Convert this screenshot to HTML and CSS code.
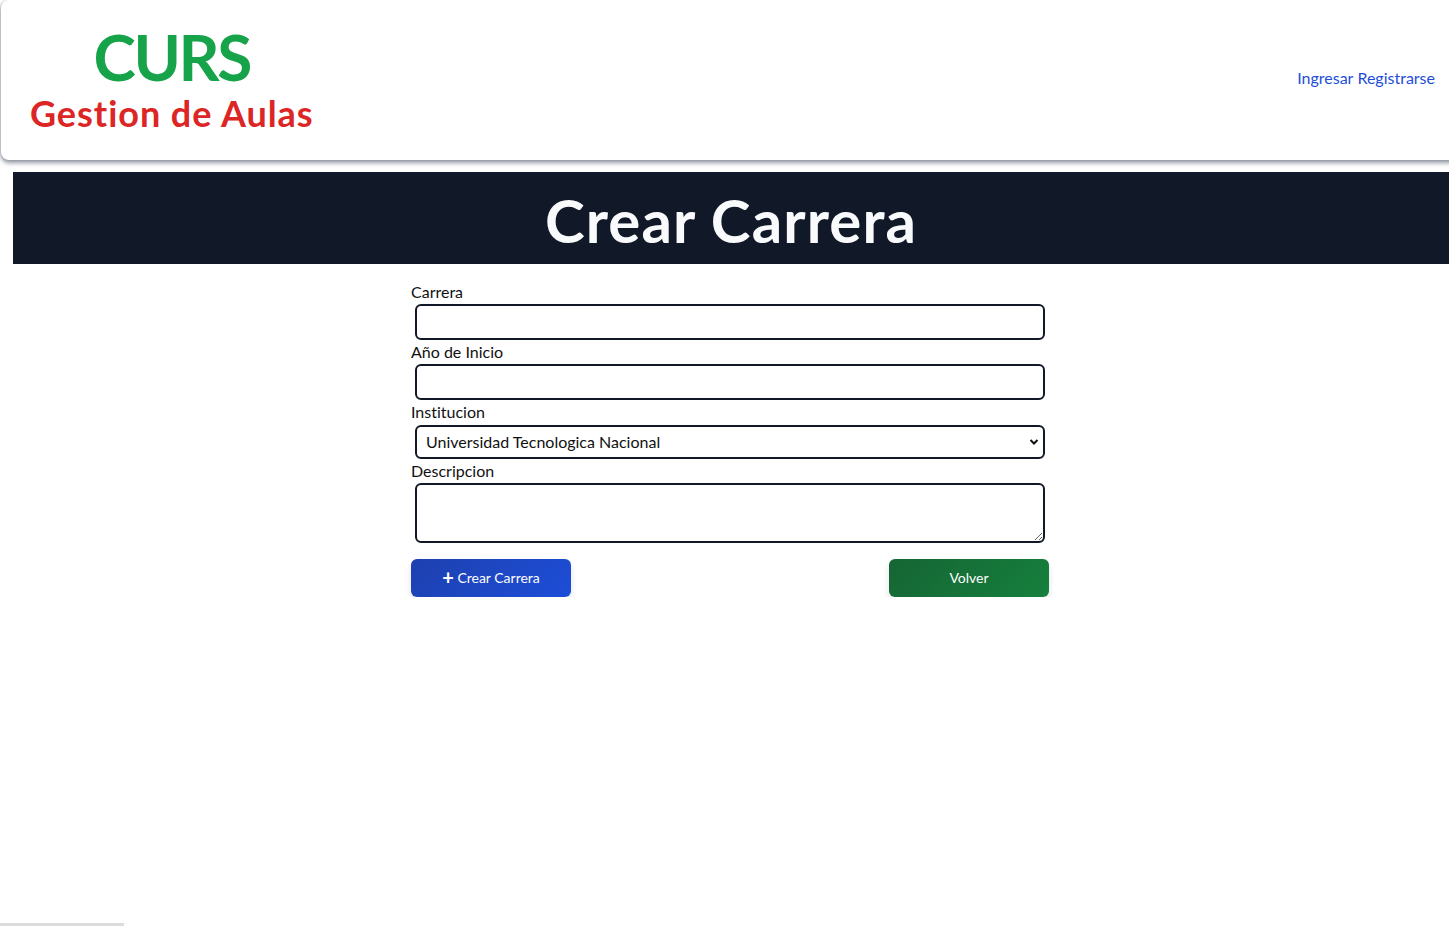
FILE: index.html
```html
<!DOCTYPE html>
<html lang="es">
<head>
<meta charset="utf-8">
<title>Crear Carrera</title>
<link rel="stylesheet" href="styles.css">
</head>
<body>
<header class="header">
  <div class="brand">
    <div class="brand-title">CURS</div>
    <div class="brand-sub">Gestion de Aulas</div>
  </div>
  <nav class="nav">
    <a href="#" class="nav-link">Ingresar</a>
    <a href="#" class="nav-link">Registrarse</a>
  </nav>
</header>
<main class="main">
  <div class="title-bar">
    <h1 class="title">Crear Carrera</h1>
  </div>
  <form class="form">
    <label class="label">Carrera</label>
    <input class="field" type="text">
    <label class="label">Año de Inicio</label>
    <input class="field" type="text">
    <label class="label">Institucion</label>
    <div class="select-wrap">
      <select class="field select">
        <option>Universidad Tecnologica Nacional</option>
      </select>
      <svg class="chevron" width="10" height="8" viewBox="0 0 10 8"><path d="M1.5 2 L5 5.5 L8.5 2" fill="none" stroke="#111" stroke-width="2"/></svg>
    </div>
    <label class="label">Descripcion</label>
    <textarea class="field textarea" rows="2"></textarea>
    <div class="actions">
      <button type="button" class="btn btn-blue"><span class="plus">+</span> Crear Carrera</button>
      <button type="button" class="btn btn-green">Volver</button>
    </div>
  </form>
</main>
<div class="scroll-thumb"></div>
</body>
</html>
```

FILE: styles.css
```css
html {
  overflow-x: hidden;
}
body {
  margin: 0;
  font-family: "Lato", "Open Sans", sans-serif;
  font-variant-ligatures: none;
  color: #111;
  background: #fff;
}
.header {
  display: flex;
  justify-content: space-between;
  align-items: center;
  height: 160px;
  margin-left: 1px;
  width: calc(100% + 10px);
  box-sizing: border-box;
  padding: 0 25px 0 29px;
  background: #fff;
  border-radius: 8px;
  box-shadow: 0 3px 4px rgba(60, 70, 90, 0.55), -1px 0 2px rgba(0,0,0,0.15);
}
.brand {
  display: flex;
  flex-direction: column;
  align-items: center;
  padding-top: 1px;
}
.brand-title {
  font-size: 64px;
  font-weight: 700;
  color: #16a34a;
  line-height: 1;
  letter-spacing: -2.4px;
}
.brand-sub {
  font-size: 36px;
  font-weight: 700;
  color: #dc2626;
  line-height: 1.2;
  margin-top: 3px;
  letter-spacing: 0.95px;
}
.nav {
  display: flex;
  gap: 4px;
  padding-bottom: 6px;
}
.nav-link {
  font-size: 16px;
  color: #1d4ed8;
  text-decoration: none;
}
.main {
  margin-left: 13px;
  margin-top: 12px;
}
.title-bar {
  background: #111827;
  height: 92px;
  width: calc(100% + 10px);
  display: flex;
  align-items: center;
  justify-content: center;
}
.title {
  margin: 0;
  padding-right: 10px;
  padding-top: 4px;
  font-size: 60px;
  font-weight: 700;
  color: #f9fafb;
  line-height: 1;
  letter-spacing: 1.1px;
}
.form {
  width: 640px;
  box-sizing: border-box;
  padding-right: 2px;
  margin: 16px auto 0;
  display: flex;
  flex-direction: column;
}
.label {
  display: block;
  font-size: 16px;
  line-height: 24px;
  color: #111;
}
.field {
  display: block;
  margin: 0 4px;
  height: 36px;
  box-sizing: border-box;
  border: 2px solid #111827;
  border-radius: 6px;
  font-family: inherit;
  font-size: 16px;
  padding: 4px 8px;
  background: #fff;
  color: #111;
}
.select-wrap {
  position: relative;
  padding-top: 1px;
}
.select {
  width: calc(100% - 8px);
  height: 34px;
  appearance: none;
  -webkit-appearance: none;
  padding-left: 9px;
  padding-bottom: 5px;
}
.chevron {
  position: absolute;
  right: 10px;
  top: 14px;
}
.textarea {
  height: 60px;
  resize: vertical;
}
.actions {
  display: flex;
  justify-content: space-between;
  margin-top: 16px;
}
.btn {
  width: 160px;
  height: 38px;
  border: none;
  border-radius: 6px;
  color: #fff;
  font-family: inherit;
  font-size: 14px;
  cursor: pointer;
  padding-bottom: 3px;
  box-shadow: 0 4px 6px rgba(0, 0, 0, 0.12);
}
.btn-blue {
  background: linear-gradient(135deg, #1e40af, #1d4ed8);
}
.btn-green {
  background: linear-gradient(135deg, #166534, #15803d);
}
.plus {
  font-size: 20px;
  font-weight: 700;
  line-height: 14px;
  vertical-align: -2px;
}
.scroll-thumb {
  position: fixed;
  left: 0;
  bottom: 1px;
  width: 124px;
  height: 3px;
  background: #dcdcdc;
}
```
